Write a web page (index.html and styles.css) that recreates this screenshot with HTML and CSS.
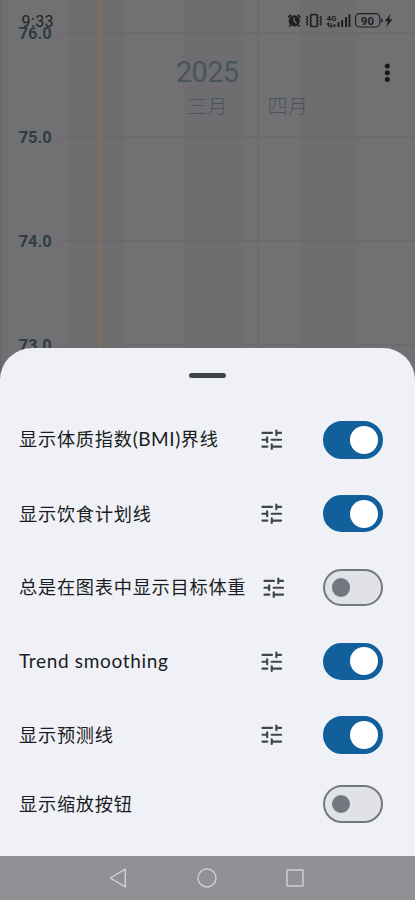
FILE: index.html
```html
<!DOCTYPE html>
<html lang="zh-CN">
<head>
<meta charset="utf-8">
<title>图表设置</title>
<link rel="stylesheet" href="styles.css">
</head>
<body>
<svg width="0" height="0" class="defs">
  <symbol id="tune" viewBox="0 0 24 24">
    <path d="M3.900 6H12.200M16 3.900V8.100M16 6H20.100M3.900 12H8M8 9.900V14.100M11.900 12H20.100M3.900 18H8.100M12 15.900V20.100M12 18H20.100"/>
  </symbol>
</svg>
<div class="screen">
  <svg class="chart" viewBox="0 0 415 400">
    <rect class="plot" width="415" height="400"/>
    <path class="edge" d="M0 0H2V400H0z"/>
    <path class="edge-soft" d="M2 0H9V400H2z"/>
    <path class="band" d="M68 0H125.500V400H68zM183 0H241.500V400H183zM300 0H358V400H300z"/>
    <path class="grid" d="M61 33.300H415M61 137.300H415M61 241H415M61 345.200H415M258 0V400"/>
    <path class="marker" d="M100.500 0V400"/>
    <g class="axis">
      <text x="18.700" y="39.200" textLength="33">76.0</text>
      <text x="18.700" y="143.200" textLength="33">75.0</text>
      <text x="18.700" y="247" textLength="33">74.0</text>
      <text x="18.700" y="351" textLength="33">73.0</text>
    </g>
    <text class="year" x="176" y="82" textLength="63">2025</text>
    <text class="month" x="187" y="114">三月</text>
    <text class="month" x="267.500" y="114">四月</text>
    <g class="more"><circle cx="387.300" cy="66" r="2.500"/><circle cx="387.300" cy="72.700" r="2.500"/><circle cx="387.300" cy="79.500" r="2.500"/></g>
    <g class="status">
      <text class="clock" x="21.500" y="26.700" textLength="32">9:33</text>
      <circle cx="294.300" cy="20.900" r="5.600"/>
      <path class="line" d="M288.300 17.300L291 14.700M297.800 14.700L300.400 17.300M290.500 25L289.200 26.600M298.100 25L299.400 26.600"/>
      <path class="hand" d="M294 17.400V21L296.500 23.300"/>
      <rect class="line" x="310.700" y="14.700" width="6.600" height="11.800" rx="1"/>
      <path class="thin" d="M306.200 16.200L307.800 17.600L306.300 19.200L307.800 20.800L306.300 22.400L307.800 24L306.400 25.300M321.600 16.200L320 17.600L321.500 19.200L320 20.800L321.500 22.400L320 24L321.400 25.300"/>
      <text class="network" x="326.500" y="20.500" textLength="10" lengthAdjust="spacingAndGlyphs">4G</text>
      <path class="thin" d="M328.600 27V23L327 24.500M331 23V27L332.400 25.500"/>
      <path d="M333.500 24.300h2V27h-2zM337.500 22.300h2V27h-2zM341.200 20h2V27h-2zM345 17h2V27h-2zM348.400 14.200h2V27h-2z"/>
      <rect class="thin" x="355.500" y="13.700" width="24.300" height="13.300" rx="4"/>
      <path d="M381.200 18.500q1.800 0 1.800 2t-1.800 2z"/>
      <text class="battery" x="360.800" y="24.800" textLength="13.300">90</text>
      <path d="M390.500 13.500L384.900 21.300H388L386 27.500L392.500 19.200H389z"/>
    </g>
  </svg>
  <main class="sheet">
    <div class="handle"></div>
    <div class="row"><span class="label">显示体质指数<span class="latin bmi">(BMI)</span>界线</span><svg class="tune"><use href="#tune"/></svg><span class="switch on"></span></div>
    <div class="row"><span class="label">显示饮食计划线</span><svg class="tune"><use href="#tune"/></svg><span class="switch on"></span></div>
    <div class="row"><span class="label">总是在图表中显示目标体重</span><svg class="tune"><use href="#tune"/></svg><span class="switch"></span></div>
    <div class="row"><span class="label latin">Trend smoothing</span><svg class="tune"><use href="#tune"/></svg><span class="switch on"></span></div>
    <div class="row"><span class="label">显示预测线</span><svg class="tune"><use href="#tune"/></svg><span class="switch on"></span></div>
    <div class="row last"><span class="label">显示缩放按钮</span><span class="switch"></span></div>
  </main>
  <nav class="nav">
    <svg viewBox="0 0 20 20"><path d="M1.200 10L16.300 1.200V18.800z"/></svg>
    <svg viewBox="0 0 20 20"><circle cx="10" cy="10" r="9"/></svg>
    <svg viewBox="0 0 20 20"><rect x="2" y="2" width="16" height="16" rx="0.500"/></svg>
  </nav>
</div>
</body>
</html>
```
FILE: styles.css
```css
* { box-sizing: border-box; }
body { margin: 0; }
.defs { position: absolute; }
.screen {
  width: 415px;
  height: 900px;
  display: flex;
  flex-direction: column;
  overflow: hidden;
  background: #6f6f71;
  font-family: "Noto Sans CJK SC", sans-serif;
}
.chart { display: block; flex: none; width: 415px; height: 400px; }
.plot { fill: #717173; }
.edge { fill: #69696b; }
.edge-soft { fill: #6f6f71; }
.band { fill: #6e6e70; }
.grid { fill: none; stroke: #696a6d; stroke-width: 1.5; }
.marker { stroke: #8a6f52; stroke-width: 2; }
.axis text { font: 700 16.5px Roboto, sans-serif; fill: #2e3c43; }
.year { font: 400 29px Roboto, sans-serif; fill: #4a555b; }
.month { font: 300 20.3px "Noto Sans CJK SC", sans-serif; fill: #4a555b; }
.more { fill: #17191d; }
.status { fill: #202022; }
.status .clock { font: 400 16px Roboto, sans-serif; }
.status .network { font: 700 8px Roboto, sans-serif; }
.status .battery { font: 700 11.5px Roboto, sans-serif; }
.line { fill: none; stroke: #202022; stroke-width: 1.7; }
.thin { fill: none; stroke: #202022; stroke-width: 1.2; }
.hand { fill: none; stroke: #717173; stroke-width: 1.3; }

.sheet {
  position: relative;
  flex: none;
  height: 508px;
  margin-top: -52.5px;
  padding: 25px 32px 0 19px;
  border-radius: 32px 32px 0 0;
  background: #f0f1f7;
}
.handle { width: 37px; height: 5px; margin: 0 auto; border-radius: 2.5px; background: #3f454c; transform: translateX(6px); }
.handle + .row { margin-top: 25.5px; }
.row { display: flex; align-items: center; height: 73.8px; }
.row.last { height: 64px; }
.label {
  min-width: 225.3px;
  margin-right: 14px;
  padding-bottom: 2px;
  color: #191c20;
  font-size: 18.2px;
  line-height: 28px;
  letter-spacing: 0.75px;
  white-space: nowrap;
}
.latin { font-family: Lato, sans-serif; font-size: 19px; letter-spacing: 0.68px; }
.label.latin { padding-bottom: 1px; }
.bmi { letter-spacing: 0.55px; }
.tune { width: 27.5px; height: 27.5px; fill: none; stroke: #41464e; stroke-width: 1.9; stroke-linecap: round; }
.switch {
  display: flex;
  align-items: center;
  width: 60px;
  height: 37.5px;
  margin-left: auto;
  padding-left: 6.8px;
  border: 2px solid #73777f;
  border-radius: 19px;
  background: #e1e2e8;
}
.switch::before { content: ""; width: 18.6px; height: 18.6px; border-radius: 50%; background: #73777f; }
.switch.on { padding-left: 25.3px; border-color: #11609c; background: #11609c; }
.switch.on::before { width: 28px; height: 28px; background: #fff; }
.nav {
  position: relative;
  flex: 1;
  display: flex;
  justify-content: center;
  align-items: center;
  gap: 68px;
  padding-right: 1px;
  background: #909194;
}
.nav svg { width: 20px; height: 20px; fill: none; stroke: #d0d0d2; stroke-width: 1.4; stroke-linejoin: round; }
```
